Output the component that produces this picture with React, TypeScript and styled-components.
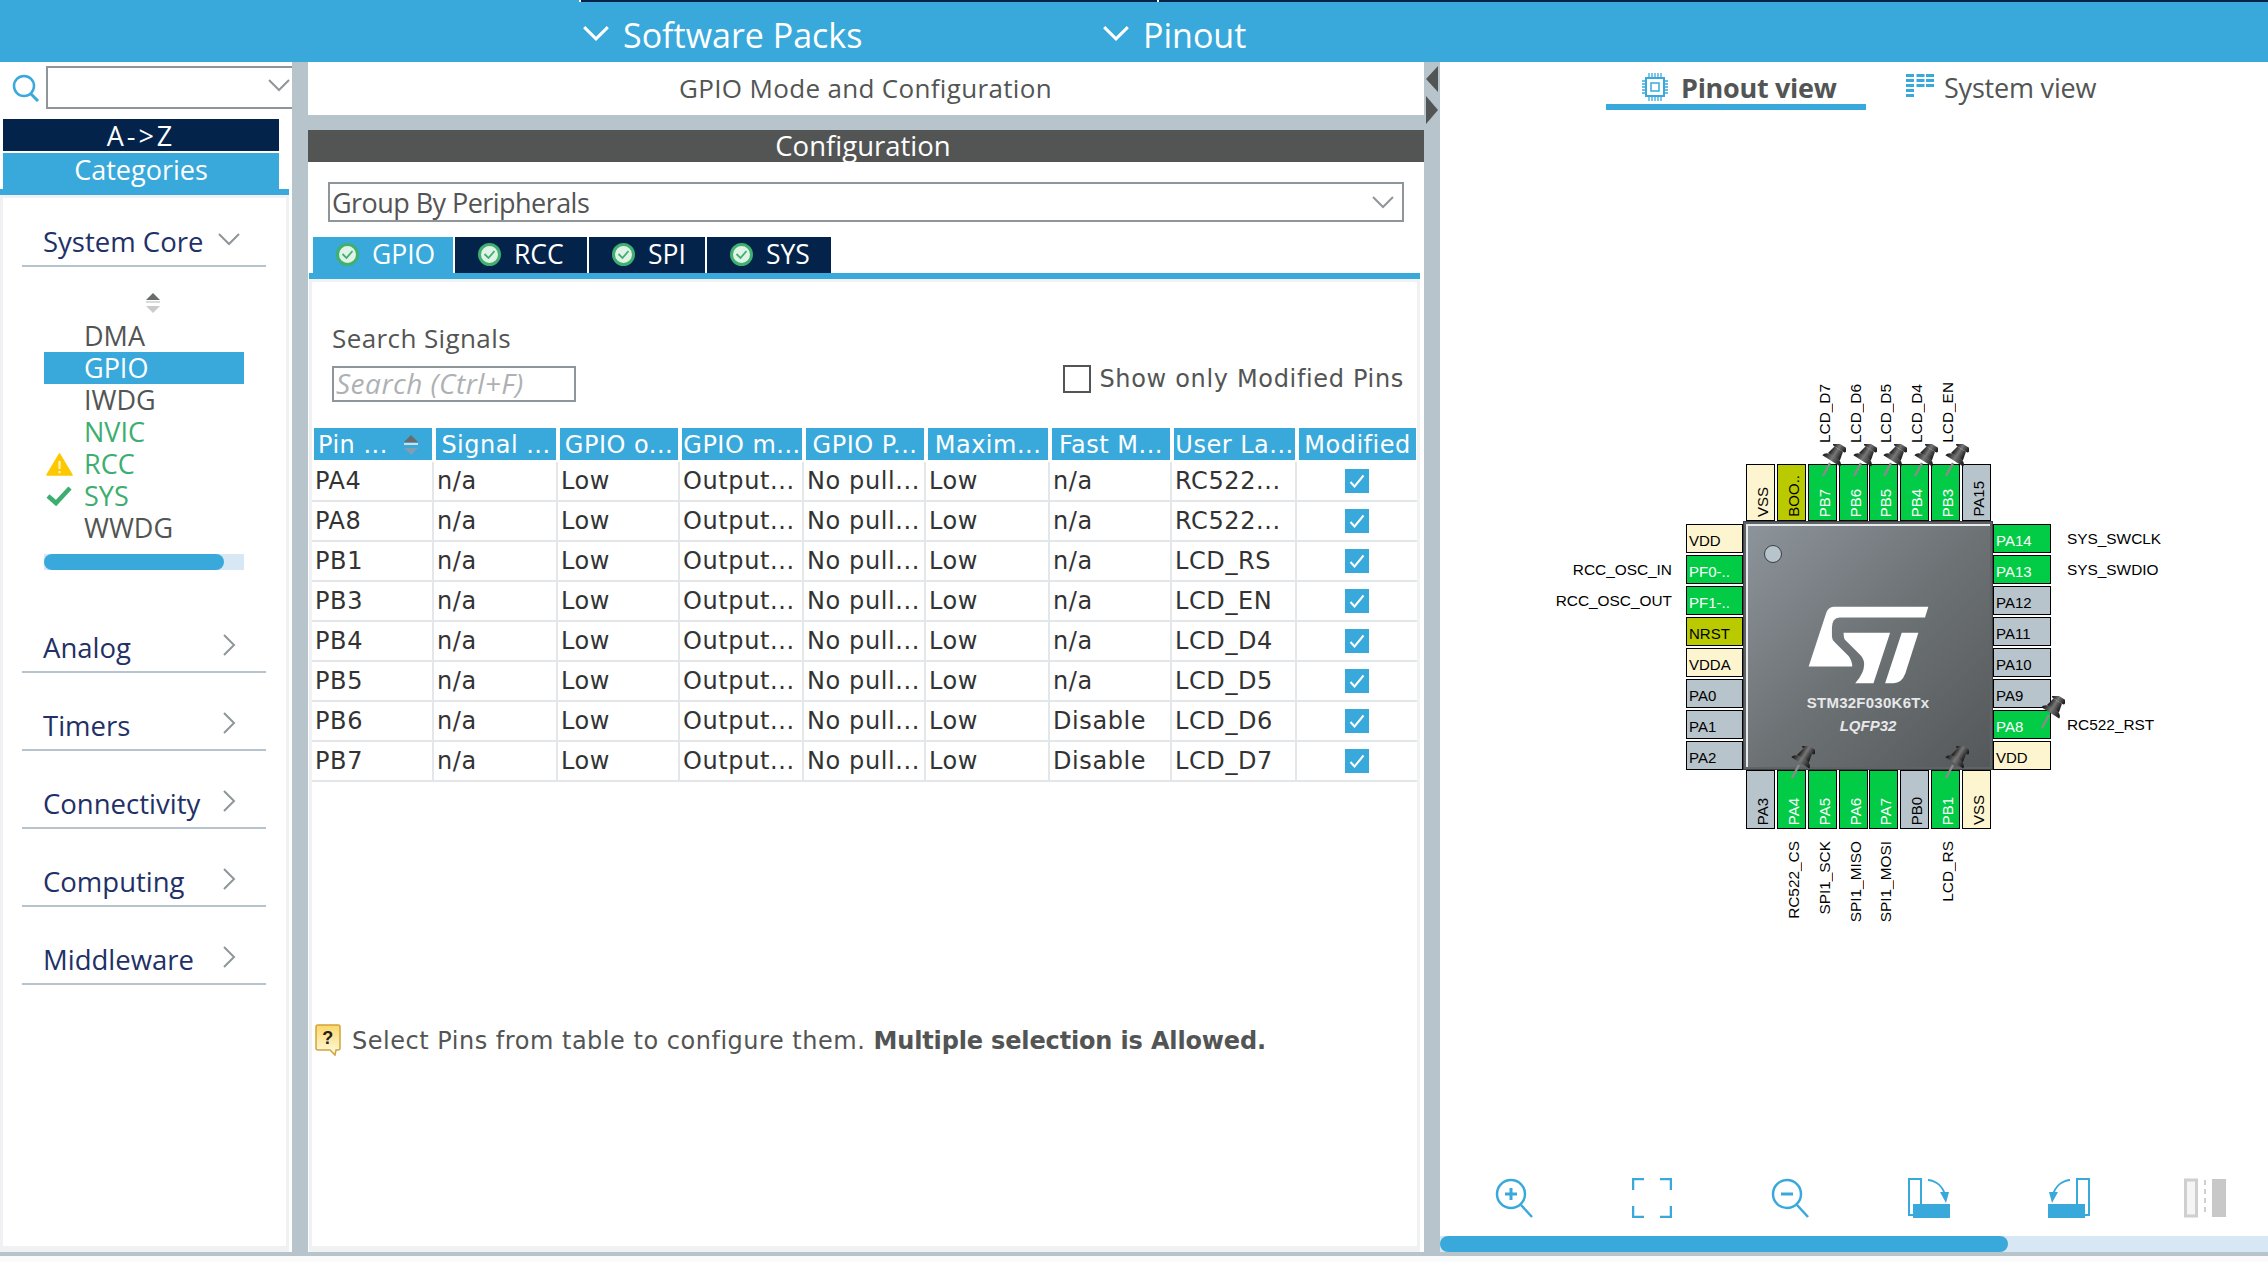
import styled, { createGlobalStyle } from "styled-components";

const BLUE = "#39a9dc";
const NAVY = "#03234b";
const SPLIT = "#b8c4cb";
const EDGE = "#eff1f3";
const UI_FONT = `"Open Sans", "Noto Sans", sans-serif`;
const TABLE_FONT = `"DejaVu Sans", "Open Sans", sans-serif`;
const PIN_FONT = `"Liberation Sans", Arial, sans-serif`;

const GlobalStyle = createGlobalStyle`
  html, body {
    margin: 0;
    padding: 0;
    background: #fff;
  }
  * {
    box-sizing: border-box;
  }
`;

const Page = styled.div`
  width: 2268px;
  height: 1262px;
  display: flex;
  flex-direction: column;
  overflow: hidden;
  font-family: ${UI_FONT};
  color: #535554;
`;

/* top bar */
const TopBar = styled.header`
  height: 62px;
  flex: none;
  background: ${BLUE};
`;

const StepStrip = styled.div`
  height: 2px;
  margin-left: 579px;
  background: ${NAVY};
  display: flex;
  span {
    width: 578px;
    border-left: 2px solid #fff;
  }
`;

const NavRow = styled.nav`
  display: flex;
  padding: 5px 0 0 583px;
  height: 60px;
  align-items: center;
`;

const NavItem = styled.div<{ $width: number }>`
  width: ${(p) => p.$width}px;
  display: flex;
  align-items: center;
  gap: 14px;
  color: #fff;
  font-size: 34px;
  svg {
    flex: none;
    margin-bottom: 4px;
  }
`;

const Main = styled.main`
  flex: 1;
  display: flex;
  min-height: 0;
`;

const Splitter = styled.div`
  width: 16px;
  flex: none;
  background: ${SPLIT};
  display: flex;
  flex-direction: column;
  padding-top: 4px;
  gap: 4px;
`;

const FooterLine = styled.div`
  height: 4px;
  flex: none;
  background: ${SPLIT};
`;

const FooterGap = styled.div`
  height: 6px;
  flex: none;
  background: #fbfbfb;
`;

/* left column */
const Sidebar = styled.aside`
  width: 292px;
  flex: none;
  display: flex;
  flex-direction: column;
`;

const SideSearch = styled.div`
  height: 57px;
  flex: none;
  display: flex;
  align-items: flex-start;
  padding: 4px 0 0 12px;
  gap: 6px;
  > svg {
    margin-top: 8px;
  }
`;

const ComboBox = styled.div`
  flex: 1;
  height: 43px;
  border: 2px solid #8f9699;
  border-right: 0;
  display: flex;
  align-items: center;
  justify-content: flex-end;
  padding: 0 2px 5px 0;
`;

const SortTab = styled.div<{ $active?: boolean }>`
  width: 276px;
  margin-left: 3px;
  text-align: center;
  color: #fff;
  font-size: 27px;
  background: ${(p) => (p.$active ? BLUE : NAVY)};
  height: ${(p) => (p.$active ? 36 : 32)}px;
  line-height: 34px;
  margin-bottom: ${(p) => (p.$active ? 0 : 2)}px;
  letter-spacing: ${(p) => (p.$active ? 0 : 3)}px;
`;

const SideUnderline = styled.div`
  height: 6px;
  width: 289px;
  flex: none;
  background: ${BLUE};
`;

const CategoryPanel = styled.div`
  flex: 1;
  width: 289px;
  border: 3px solid ${EDGE};
  border-bottom-width: 6px;
  display: flex;
  flex-direction: column;
`;

const CategoryHead = styled.div<{ $gap: number }>`
  width: 244px;
  height: 48px;
  flex: none;
  margin: ${(p) => p.$gap}px 0 0 19px;
  border-bottom: 2px solid ${SPLIT};
  display: flex;
  align-items: center;
  justify-content: space-between;
  padding: 0 26px 0 21px;
  font-size: 27.5px;
  line-height: 36px;
  color: #1f3166;
  svg {
    margin-bottom: 6px;
  }
`;

const ScrollArrows = styled.div`
  margin: 26px 0 0 142px;
  height: 20px;
  display: flex;
`;

const PeripheralList = styled.ul`
  list-style: none;
  margin: 7px 0 0 41px;
  padding: 0;
  width: 200px;
`;

const PeripheralRow = styled.li<{ $selected?: boolean; $ok?: boolean }>`
  height: 32px;
  display: grid;
  grid-template-columns: 40px 1fr;
  align-items: center;
  font-size: 27px;
  line-height: 32px;
  background: ${(p) => (p.$selected ? BLUE : "transparent")};
  color: ${(p) => (p.$selected ? "#fff" : p.$ok ? "#3dae6f" : "#535554")};
  span {
    grid-column: 2;
    grid-row: 1;
  }
  svg {
    grid-column: 1;
    grid-row: 1;
    margin-left: 2px;
  }
`;

const ScrollTrack = styled.div<{ $width: number; $thumb: number; $left: number; $top: number }>`
  width: ${(p) => p.$width}px;
  height: 16px;
  flex: none;
  margin: ${(p) => p.$top}px 0 0 ${(p) => p.$left}px;
  background: #d7e7f4;
  &::before {
    content: "";
    display: block;
    width: ${(p) => p.$thumb}px;
    height: 100%;
    background: ${BLUE};
    border-radius: 8px;
  }
`;

/* middle column */
const Center = styled.section`
  width: 1116px;
  flex: none;
  display: flex;
  flex-direction: column;
`;

const CenterTitle = styled.div`
  height: 53px;
  flex: none;
  text-align: center;
  line-height: 52px;
  font-size: 26px;
  letter-spacing: 0.33px;
  padding-right: 1px;
`;

const Band = styled.div`
  height: 15px;
  flex: none;
  background: ${SPLIT};
`;

const DarkBar = styled.div`
  height: 32px;
  flex: none;
  background: #535554;
  color: #fff;
  text-align: center;
  line-height: 32px;
  font-size: 27.5px;
  padding-right: 6px;
`;

const GroupSelect = styled.div`
  height: 40px;
  flex: none;
  margin: 20px 20px 0 20px;
  border: 2px solid #8f9699;
  display: flex;
  align-items: center;
  justify-content: space-between;
  padding: 0 8px 0 2px;
  font-size: 27px;
  letter-spacing: -0.55px;
`;

const TabBar = styled.div`
  display: flex;
  gap: 2px;
  flex: none;
  margin: 15px 4px 0 1px;
  padding-left: 4px;
  border-bottom: 6px solid ${BLUE};
`;

const Tab = styled.div<{ $active?: boolean; $width: number }>`
  width: ${(p) => p.$width}px;
  height: 36px;
  padding: 0 0 2px 23px;
  display: flex;
  align-items: center;
  gap: 13px;
  background: ${(p) => (p.$active ? BLUE : NAVY)};
  color: #fff;
  font-size: 26.5px;
`;

const ConfigPanel = styled.div`
  flex: 1;
  margin: 0 4px 0 1px;
  border: 3px solid ${EDGE};
  border-bottom-width: 6px;
  display: flex;
  flex-direction: column;
`;

const SignalRow = styled.div`
  display: flex;
  justify-content: space-between;
  align-items: flex-end;
  padding: 38px 13px 0 20px;
`;

const SignalLabel = styled.div`
  height: 36px;
  line-height: 36px;
  font-size: 26px;
  letter-spacing: 0.4px;
`;

const SignalInput = styled.div`
  width: 244px;
  height: 36px;
  margin-top: 10px;
  border: 2px solid #8f9699;
  padding-left: 2px;
  line-height: 31px;
  font-size: 28px;
  letter-spacing: 0.5px;
  font-style: italic;
  color: #aeb1b3;
  white-space: nowrap;
`;

const ModifiedToggle = styled.label`
  display: flex;
  align-items: center;
  gap: 8px;
  height: 24px;
  margin-bottom: 11px;
  font-family: ${TABLE_FONT};
  font-size: 24px;
  letter-spacing: 0.67px;
  &::before {
    content: "";
    width: 24px;
    height: 24px;
    border: 2px solid #535554;
  }
`;

const COLUMNS = "122px 124px 122px 124px 122px 124px 122px 125px 121px";

const PinTable = styled.div`
  margin: 26px 0 0 2px;
`;

const HeadRow = styled.div`
  display: grid;
  grid-template-columns: ${COLUMNS};
  margin-bottom: 2px;
`;

const HeadCell = styled.div<{ $sortable?: boolean }>`
  height: 32px;
  margin-right: 4px;
  background: ${BLUE};
  color: #fff;
  line-height: 30px;
  font-family: ${TABLE_FONT};
  font-size: 24px;
  letter-spacing: 0.5px;
  white-space: nowrap;
  display: flex;
  align-items: center;
  justify-content: ${(p) => (p.$sortable ? "space-between" : "center")};
  padding: ${(p) => (p.$sortable ? "2px 13px 0 4px" : "2px 0 0")};
`;

const DataRow = styled.div`
  display: grid;
  grid-template-columns: ${COLUMNS};
  height: 40px;
  margin-left: -2px;
  padding-left: 2px;
  border-bottom: 2px solid #e4e7ea;
`;

const DataCell = styled.div<{ $center?: boolean }>`
  margin-right: 2px;
  border-right: 2px solid #e4e7ea;
  padding-left: 1px;
  font-family: ${TABLE_FONT};
  font-size: 24px;
  line-height: 30px;
  letter-spacing: 0.6px;
  color: #333;
  white-space: nowrap;
  display: flex;
  align-items: center;
  justify-content: ${(p) => (p.$center ? "center" : "flex-start")};
  &:last-child {
    border-right: 0;
    margin-right: 6px;
    padding-bottom: 1px;
  }
`;

const CheckBadge = styled.div`
  width: 24px;
  height: 24px;
  background: ${BLUE};
  display: flex;
  align-items: center;
  justify-content: center;
`;

const HintRow = styled.div`
  display: flex;
  align-items: center;
  gap: 11px;
  margin: 242px 0 0 3px;
  height: 32px;
  font-family: ${TABLE_FONT};
  font-size: 24px;
  letter-spacing: 0.52px;
  span {
    padding-top: 2px;
  }
  b {
    font-weight: 700;
    letter-spacing: -0.15px;
  }
`;

/* right column */
const PinoutPane = styled.section`
  flex: 1;
  display: flex;
  flex-direction: column;
  min-width: 0;
`;

const ViewTabs = styled.div`
  height: 48px;
  flex: none;
  display: flex;
  padding-left: 166px;
`;

const ViewTab = styled.div<{ $active?: boolean }>`
  width: ${(p) => (p.$active ? 260 : 320)}px;
  padding: 8px 0 0 ${(p) => (p.$active ? 36 : 40)}px;
  display: flex;
  align-items: center;
  gap: ${(p) => (p.$active ? 13 : 10)}px;
  border-bottom: 6px solid ${(p) => (p.$active ? BLUE : "transparent")};
  font-size: 27px;
  font-weight: ${(p) => (p.$active ? 700 : 400)};
  letter-spacing: ${(p) => (p.$active ? -0.3 : -0.2)}px;
`;

const ChipGrid = styled.div`
  display: grid;
  grid-template-columns: 57px 250px 58px;
  grid-template-rows: 57px 249px 59px;
  margin: 354px 0 0 246px;
  width: 365px;
  font-family: ${PIN_FONT};
  font-size: 15px;
  line-height: 17px;
  color: #000;
`;

const PinStrip = styled.div<{ $side: "top" | "bottom" | "left" | "right" }>`
  display: flex;
  justify-content: space-between;
  flex-direction: ${(p) => (p.$side === "left" || p.$side === "right" ? "column" : "row")};
  padding: ${(p) => (p.$side === "left" || p.$side === "right" ? "3px 0 0" : "0 2px 0 3px")};
  grid-column: ${(p) => (p.$side === "left" ? 1 : p.$side === "right" ? 3 : 2)};
  grid-row: ${(p) => (p.$side === "top" ? 1 : p.$side === "bottom" ? 3 : 2)};
`;

const PIN_COLORS = {
  free: { bg: SPLIT, fg: "#000" },
  used: { bg: "#02cc45", fg: "#fff" },
  power: { bg: "#fdf5d0", fg: "#000" },
  ctrl: { bg: "#b9cb00", fg: "#000" },
};

type PinKind = keyof typeof PIN_COLORS;
type Side = "top" | "bottom" | "left" | "right";

const PinBox = styled.div<{ $kind: PinKind; $vertical: boolean }>`
  position: relative;
  border: 1px solid #000;
  background: ${(p) => PIN_COLORS[p.$kind].bg};
  color: ${(p) => PIN_COLORS[p.$kind].fg};
  width: ${(p) => (p.$vertical ? "29px" : "auto")};
  height: ${(p) => (p.$vertical ? "100%" : "29px")};
  display: flex;
  white-space: nowrap;
  ${(p) =>
    p.$vertical
      ? `align-items: flex-end; justify-content: flex-end; padding: 0 3px 3px 0;`
      : `align-items: center; padding: 4px 0 0 2px;`}
`;

const PinText = styled.span<{ $vertical: boolean }>`
  ${(p) => (p.$vertical ? "writing-mode: vertical-rl; transform: rotate(180deg);" : "")}
`;

const SignalName = styled.span<{ $side: Side }>`
  position: absolute;
  white-space: nowrap;
  color: #000;
  font-size: 15.4px;
  ${(p) => (p.$side === "top" || p.$side === "bottom" ? "writing-mode: vertical-rl; transform: rotate(180deg); right: 3px;" : "")}
  ${(p) => (p.$side === "top" ? "bottom: calc(100% + 22px);" : "")}
  ${(p) => (p.$side === "bottom" ? "top: calc(100% + 13px);" : "")}
  ${(p) => (p.$side === "left" ? "right: calc(100% + 15px); top: 5px;" : "")}
  ${(p) => (p.$side === "right" ? "left: calc(100% + 17px); top: 5px;" : "")}
`;

const PinHolder = styled.span<{ $side: Side }>`
  position: absolute;
  display: block;
  width: 26px;
  height: 33px;
  z-index: 2;
  left: ${(p) => (p.$side === "right" ? 45 : 11)}px;
  top: ${(p) => (p.$side === "top" ? -21 : p.$side === "bottom" ? -25 : -15)}px;
`;

const ChipBody = styled.div`
  grid-column: 2;
  grid-row: 2;
  position: relative;
  background: linear-gradient(135deg, #8d949b 0%, #6d7275 50%, #54585a 100%);
  border: 3px solid #5f6366;
  outline: 1px solid #3d4042;
  outline-offset: -1px;
  box-shadow: inset 2px 2px 0 #e8ebec;
  display: flex;
  flex-direction: column;
  align-items: center;
  padding-top: 81px;
  color: #e6e8e9;
  font-family: ${PIN_FONT};
  font-weight: 700;
`;

const ChipDot = styled.span`
  position: absolute;
  left: 18px;
  top: 21px;
  width: 18px;
  height: 18px;
  border-radius: 50%;
  background: ${SPLIT};
  border: 1px solid #3b3f42;
`;

const ChipName = styled.div`
  margin-top: 8px;
  font-size: 15px;
  letter-spacing: 0.25px;
  line-height: 20px;
`;

const ChipPackage = styled.div`
  margin-top: 3px;
  font-size: 15px;
  line-height: 20px;
  font-style: italic;
`;

const ToolBar = styled.div`
  margin-top: auto;
  flex: none;
  display: flex;
  height: 40px;
  padding-left: 54px;
  margin-bottom: 18px;
`;

const ToolSlot = styled.div`
  width: 138px;
  height: 40px;
  flex: none;
`;

/* drawings */
const Chevron = ({ dir = "down", size = 22, color = "#8f9699", width = 2 }: { dir?: "down" | "right"; size?: number; color?: string; width?: number }) => (
  <svg width={size} height={size} viewBox="0 0 22 22" fill="none" stroke={color} strokeWidth={width}>
    {dir === "down" ? <path d="M1 6l10 10L21 6" /> : <path d="M6 1l10 10L6 21" />}
  </svg>
);

const SortIcon = ({ up, down }: { up: string; down: string }) => (
  <svg width="16" height="20" viewBox="0 0 16 20">
    <path d="M8 0l7 7H1z" fill={up} />
    <rect x="1" y="8" width="14" height="2" fill="#d8dadb" />
    <path d="M8 20l7-7H1z" fill={down} />
  </svg>
);

const TabCheck = () => (
  <svg width="23" height="23" viewBox="0 0 23 23">
    <circle cx="11.5" cy="11.5" r="10" fill="#dff3e6" stroke="#3fb06e" strokeWidth="3" />
    <path d="M6.5 11l4 4 6-7" fill="none" stroke="#3fb06e" strokeWidth="1.8" />
  </svg>
);

const WarningIcon = () => (
  <svg width="27" height="23" viewBox="0 0 27 23">
    <path d="M13.5 1L26 22H1z" fill="#fdc800" stroke="#fdc800" strokeWidth="1.5" strokeLinejoin="round" />
    <rect x="12.4" y="8" width="2.2" height="8" fill="#fff3c0" />
    <rect x="12.4" y="18" width="2.2" height="2.2" fill="#fff3c0" />
  </svg>
);

const OkIcon = () => (
  <svg width="26" height="22" viewBox="0 0 26 22">
    <path d="M2 11l8 7L24 3" fill="none" stroke="#3dae6f" strokeWidth="4.5" />
  </svg>
);

const PushPin = () => (
  <svg width="26" height="33" viewBox="0 0 26 33">
    <defs>
      <linearGradient id="pinHead" x1="0" y1="0" x2="1" y2="0">
        <stop offset="0" stopColor="#111" />
        <stop offset="0.45" stopColor="#777" />
        <stop offset="1" stopColor="#111" />
      </linearGradient>
    </defs>
    <path d="M3 32l7-13" stroke="#8a8a8a" strokeWidth="2.5" fill="none" />
    <g transform="rotate(32 15 11)" fill="url(#pinHead)">
      <rect x="7.500" y="-1" width="15" height="5" rx="2" />
      <path d="M10 4h10l2 9H8z" />
      <path d="M4.500 18c0-3.500 4-6 10.500-6s10.500 2.500 10.500 6z" />
    </g>
  </svg>
);

const STLogo = () => (
  <svg width="123" height="80" viewBox="50 45 370 240">
    <path
      fill="#fff"
      d="M130 50H415L405 82H148Q125 84 125 112V140Q125 150 135 158L175 198Q186 212 186 230H55L108 68Q114 52 130 50Z"
    />
    <path fill="#fff" d="M160 128H300L250 280H195Q222 250 222 222Q222 205 205 190L165 150Q160 145 160 128Z" />
    <path fill="#fff" d="M335 128H385L346 250Q335 280 310 280H285Z" />
  </svg>
);

const SearchGlass = () => (
  <svg width="28" height="28" viewBox="0 0 28 28" fill="none" stroke={BLUE} strokeWidth="2.5">
    <circle cx="12" cy="12" r="10" />
    <path d="M19 20l7 7" strokeWidth="3" />
  </svg>
);

const ChipIcon = () => (
  <svg width="26" height="28" viewBox="0 0 26 28" fill="none" stroke={BLUE}>
    <rect x="4" y="5" width="18" height="18" strokeWidth="2" />
    <rect x="9" y="10" width="8" height="8" strokeWidth="1.5" />
    <path
      strokeWidth="1.300"
      d="M7 0v4M10 0v4M13 0v4M16 0v4M19 0v4M7 24v4M10 24v4M13 24v4M16 24v4M19 24v4M0 8h3M0 11h3M0 14h3M0 17h3M0 20h3M23 8h3M23 11h3M23 14h3M23 17h3M23 20h3"
    />
  </svg>
);

const SystemIcon = () => (
  <svg width="28" height="26" viewBox="0 0 28 26" fill={BLUE}>
    {[0, 10.500, 20].map((x, col) =>
      [0, 5, 10, 15, 20].slice(0, col === 0 ? 5 : 3).map((y) => <rect key={`${x}-${y}`} x={x} y={y} width="8" height="3" />)
    )}
  </svg>
);

const ZoomIcon = ({ plus }: { plus?: boolean }) => (
  <svg width="40" height="40" viewBox="0 0 40 40" fill="none" stroke={BLUE} strokeWidth="2.5">
    <circle cx="17" cy="16" r="14" />
    <path d="M27 27l11 12" />
    <path d="M11 16h12" strokeWidth="3" />
    {plus && <path d="M17 10v12" strokeWidth="3" />}
  </svg>
);

const FitIcon = () => (
  <svg width="40" height="40" viewBox="0 0 40 40" fill="none" stroke={BLUE} strokeWidth="2.5">
    <path d="M1 12V1h11M28 1h11v11M39 28v11H28M12 39H1V28" />
  </svg>
);

const RotateIcon = ({ flip }: { flip?: boolean }) => (
  <svg width="44" height="40" viewBox="0 0 44 40" style={flip ? { transform: "scaleX(-1)" } : undefined}>
    <rect x="1" y="1" width="12" height="36" fill="none" stroke={BLUE} strokeWidth="2" />
    <rect x="5" y="26" width="37" height="14" fill={BLUE} />
    <path d="M20 2c9 1 15 7 17 15" fill="none" stroke={BLUE} strokeWidth="2" />
    <path d="M32 14l9 0-3 11z" fill={BLUE} />
  </svg>
);

const CompareIcon = () => (
  <svg width="42" height="40" viewBox="0 0 42 40" fill="none">
    <rect x="1.500" y="2" width="11" height="36" fill="#f5f5f5" stroke="#cfcfcf" strokeWidth="3" />
    <path d="M21 2v36" stroke="#cfcfcf" strokeWidth="2" strokeDasharray="5 4" />
    <rect x="28" y="1" width="14" height="38" fill="#c8c8c8" />
  </svg>
);

const HintIcon = () => (
  <svg width="26" height="32" viewBox="0 0 26 32">
    <defs>
      <linearGradient id="hintFill" x1="0" y1="0" x2="0" y2="1">
        <stop offset="0" stopColor="#fbd868" />
        <stop offset="1" stopColor="#fffbe6" />
      </linearGradient>
    </defs>
    <path
      d="M3 1h20a2 2 0 012 2v21a2 2 0 01-2 2h-2l-1 5-5-5H3a2 2 0 01-2-2V3a2 2 0 012-2z"
      fill="url(#hintFill)"
      stroke="#d2a33a"
      strokeWidth="1.500"
    />
    <text x="13" y="20" textAnchor="middle" fontFamily={PIN_FONT} fontWeight="700" fontSize="18" fill="#222">
      ?
    </text>
  </svg>
);

const CheckMark = () => (
  <svg width="16" height="14" viewBox="0 0 16 14">
    <path d="M1.500 8l4 4.500L14.500 1.500" fill="none" stroke="#fff" strokeWidth="2" />
  </svg>
);

/* data */
type PinDef = { name: string; kind: PinKind; signal?: string; pinned?: boolean };

const TOP_PINS: PinDef[] = [
  { name: "VSS", kind: "power" },
  { name: "BOO..", kind: "ctrl" },
  { name: "PB7", kind: "used", signal: "LCD_D7", pinned: true },
  { name: "PB6", kind: "used", signal: "LCD_D6", pinned: true },
  { name: "PB5", kind: "used", signal: "LCD_D5", pinned: true },
  { name: "PB4", kind: "used", signal: "LCD_D4", pinned: true },
  { name: "PB3", kind: "used", signal: "LCD_EN", pinned: true },
  { name: "PA15", kind: "free" },
];

const LEFT_PINS: PinDef[] = [
  { name: "VDD", kind: "power" },
  { name: "PF0-..", kind: "used", signal: "RCC_OSC_IN" },
  { name: "PF1-..", kind: "used", signal: "RCC_OSC_OUT" },
  { name: "NRST", kind: "ctrl" },
  { name: "VDDA", kind: "power" },
  { name: "PA0", kind: "free" },
  { name: "PA1", kind: "free" },
  { name: "PA2", kind: "free" },
];

const RIGHT_PINS: PinDef[] = [
  { name: "PA14", kind: "used", signal: "SYS_SWCLK" },
  { name: "PA13", kind: "used", signal: "SYS_SWDIO" },
  { name: "PA12", kind: "free" },
  { name: "PA11", kind: "free" },
  { name: "PA10", kind: "free" },
  { name: "PA9", kind: "free" },
  { name: "PA8", kind: "used", signal: "RC522_RST", pinned: true },
  { name: "VDD", kind: "power" },
];

const BOTTOM_PINS: PinDef[] = [
  { name: "PA3", kind: "free" },
  { name: "PA4", kind: "used", signal: "RC522_CS", pinned: true },
  { name: "PA5", kind: "used", signal: "SPI1_SCK" },
  { name: "PA6", kind: "used", signal: "SPI1_MISO" },
  { name: "PA7", kind: "used", signal: "SPI1_MOSI" },
  { name: "PB0", kind: "free" },
  { name: "PB1", kind: "used", signal: "LCD_RS", pinned: true },
  { name: "VSS", kind: "power" },
];

const HEADERS = ["Signal ...", "GPIO o...", "GPIO m...", "GPIO P...", "Maxim...", "Fast M...", "User La...", "Modified"];

const ROWS = [
  ["PA4", "n/a", "Low", "Output...", "No pull...", "Low", "n/a", "RC522..."],
  ["PA8", "n/a", "Low", "Output...", "No pull...", "Low", "n/a", "RC522..."],
  ["PB1", "n/a", "Low", "Output...", "No pull...", "Low", "n/a", "LCD_RS"],
  ["PB3", "n/a", "Low", "Output...", "No pull...", "Low", "n/a", "LCD_EN"],
  ["PB4", "n/a", "Low", "Output...", "No pull...", "Low", "n/a", "LCD_D4"],
  ["PB5", "n/a", "Low", "Output...", "No pull...", "Low", "n/a", "LCD_D5"],
  ["PB6", "n/a", "Low", "Output...", "No pull...", "Low", "Disable", "LCD_D6"],
  ["PB7", "n/a", "Low", "Output...", "No pull...", "Low", "Disable", "LCD_D7"],
];

const PERIPHERALS = [
  { name: "DMA" },
  { name: "GPIO", selected: true },
  { name: "IWDG" },
  { name: "NVIC", ok: true },
  { name: "RCC", ok: true, icon: <WarningIcon /> },
  { name: "SYS", ok: true, icon: <OkIcon /> },
  { name: "WWDG" },
];

const TABS = [
  { name: "GPIO", width: 140, active: true },
  { name: "RCC", width: 132 },
  { name: "SPI", width: 116 },
  { name: "SYS", width: 124 },
];

function PinStripOf({ side, pins }: { side: Side; pins: PinDef[] }) {
  const vertical = side === "top" || side === "bottom";
  return (
    <PinStrip $side={side}>
      {pins.map((pin) => (
        <PinBox key={pin.name} $kind={pin.kind} $vertical={vertical}>
          <PinText $vertical={vertical}>{pin.name}</PinText>
          {pin.signal && <SignalName $side={side}>{pin.signal}</SignalName>}
          {pin.pinned && (
            <PinHolder $side={side}>
              <PushPin />
            </PinHolder>
          )}
        </PinBox>
      ))}
    </PinStrip>
  );
}

export default function App() {
  return (
    <Page>
      <GlobalStyle />
      <TopBar>
        <StepStrip>
          <span />
          <span />
        </StepStrip>
        <NavRow>
          <NavItem $width={520}>
            <Chevron size={26} color="#fff" width={2.5} />
            Software Packs
          </NavItem>
          <NavItem $width={200}>
            <Chevron size={26} color="#fff" width={2.5} />
            Pinout
          </NavItem>
        </NavRow>
      </TopBar>

      <Main>
        <Sidebar>
          <SideSearch>
            <SearchGlass />
            <ComboBox>
              <Chevron />
            </ComboBox>
          </SideSearch>
          <SortTab>A-&gt;Z</SortTab>
          <SortTab $active>Categories</SortTab>
          <SideUnderline />
          <CategoryPanel>
            <CategoryHead $gap={21}>
              System Core
              <Chevron />
            </CategoryHead>
            <ScrollArrows>
              <SortIcon up="#6a6c6c" down="#c9cbcc" />
            </ScrollArrows>
            <PeripheralList>
              {PERIPHERALS.map((p) => (
                <PeripheralRow key={p.name} $selected={p.selected} $ok={p.ok}>
                  {p.icon}
                  <span>{p.name}</span>
                </PeripheralRow>
              ))}
            </PeripheralList>
            <ScrollTrack $width={200} $thumb={180} $left={41} $top={10} />
            {["Analog", "Timers", "Connectivity", "Computing", "Middleware"].map((name, i) => (
              <CategoryHead key={name} $gap={i === 0 ? 55 : 30}>
                {name}
                <Chevron dir="right" />
              </CategoryHead>
            ))}
          </CategoryPanel>
        </Sidebar>

        <Splitter />

        <Center>
          <CenterTitle>GPIO Mode and Configuration</CenterTitle>
          <Band />
          <DarkBar>Configuration</DarkBar>
          <GroupSelect>
            Group By Peripherals
            <Chevron />
          </GroupSelect>
          <TabBar>
            {TABS.map((tab) => (
              <Tab key={tab.name} $active={tab.active} $width={tab.width}>
                <TabCheck />
                {tab.name}
              </Tab>
            ))}
          </TabBar>
          <ConfigPanel>
            <SignalRow>
              <div>
                <SignalLabel>Search Signals</SignalLabel>
                <SignalInput>Search (Ctrl+F)</SignalInput>
              </div>
              <ModifiedToggle>Show only Modified Pins</ModifiedToggle>
            </SignalRow>
            <PinTable>
              <HeadRow>
                <HeadCell $sortable>
                  Pin ...
                  <SortIcon up="#6a6c6c" down="#7f9fb5" />
                </HeadCell>
                {HEADERS.map((h) => (
                  <HeadCell key={h}>{h}</HeadCell>
                ))}
              </HeadRow>
              {ROWS.map((row) => (
                <DataRow key={row[0]}>
                  {row.map((value, i) => (
                    <DataCell key={i}>{value}</DataCell>
                  ))}
                  <DataCell $center>
                    <CheckBadge>
                      <CheckMark />
                    </CheckBadge>
                  </DataCell>
                </DataRow>
              ))}
            </PinTable>
            <HintRow>
              <HintIcon />
              <span>
                Select Pins from table to configure them. <b>Multiple selection is Allowed.</b>
              </span>
            </HintRow>
          </ConfigPanel>
        </Center>

        <Splitter>
          <svg width="16" height="26" viewBox="0 0 16 26">
            <path d="M14 0v26L2 13z" fill="#535554" />
          </svg>
          <svg width="16" height="28" viewBox="0 0 16 28">
            <path d="M2 0v28l12-14z" fill="#535554" />
          </svg>
        </Splitter>

        <PinoutPane>
          <ViewTabs>
            <ViewTab $active>
              <ChipIcon />
              Pinout view
            </ViewTab>
            <ViewTab>
              <SystemIcon />
              System view
            </ViewTab>
          </ViewTabs>

          <ChipGrid>
            <PinStripOf side="top" pins={TOP_PINS} />
            <PinStripOf side="left" pins={LEFT_PINS} />
            <ChipBody>
              <ChipDot />
              <STLogo />
              <ChipName>STM32F030K6Tx</ChipName>
              <ChipPackage>LQFP32</ChipPackage>
            </ChipBody>
            <PinStripOf side="right" pins={RIGHT_PINS} />
            <PinStripOf side="bottom" pins={BOTTOM_PINS} />
          </ChipGrid>

          <ToolBar>
            <ToolSlot>
              <ZoomIcon plus />
            </ToolSlot>
            <ToolSlot>
              <FitIcon />
            </ToolSlot>
            <ToolSlot>
              <ZoomIcon />
            </ToolSlot>
            <ToolSlot>
              <RotateIcon />
            </ToolSlot>
            <ToolSlot>
              <RotateIcon flip />
            </ToolSlot>
            <ToolSlot>
              <CompareIcon />
            </ToolSlot>
          </ToolBar>
          <ScrollTrack $width={828} $thumb={568} $left={0} $top={0} />
        </PinoutPane>
      </Main>

      <FooterLine />
      <FooterGap />
    </Page>
  );
}
